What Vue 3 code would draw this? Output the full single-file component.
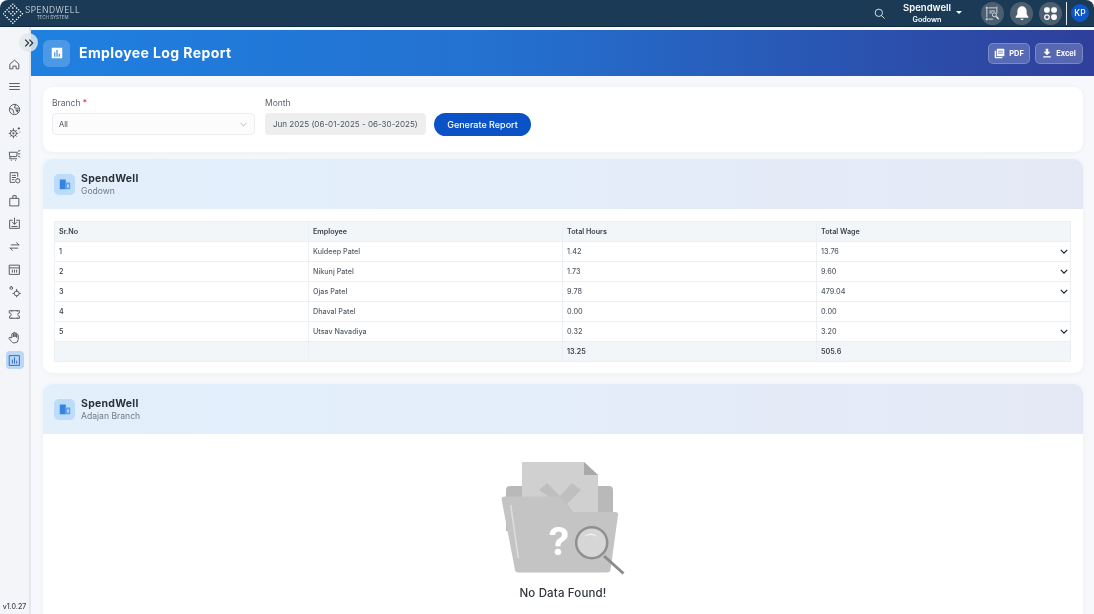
<template>
  <div class="app">
    <header class="topbar">
      <div class="logo">
        <svg class="logo-mark" viewBox="0 0 22 22" width="21" height="21">
          <rect v-for="d in logoDots" :key="d.k" :x="d.x" :y="d.y" width="1.400" height="1.400" fill="#fff" :transform="`rotate(45 ${d.x + 0.7} ${d.y + 0.7})`" />
        </svg>
        <div class="logo-text">
          <span class="logo-name">SPENDWELL</span>
          <span class="logo-sub">TECH SYSTEM</span>
        </div>
      </div>
      <div class="top-right">
        <svg class="search" viewBox="0 0 24 24" width="11" height="11" fill="none" stroke="#e8edf2" stroke-width="2">
          <circle cx="10.500" cy="10.500" r="8" />
          <path d="M16.500 16.500 23 23" />
        </svg>
        <div class="company">
          <div class="company-text">
            <span class="company-name">Spendwell</span>
            <span class="company-branch">Godown</span>
          </div>
          <span class="caret"></span>
        </div>
        <span class="round wide">
          <svg viewBox="0 0 24 24" width="15" height="15" fill="none" stroke="#d4dbe1" stroke-width="1.600">
            <path d="M3 1v4M1 3h4M19 1v4M3 19v4M1 21h4" />
            <path d="M3 5v13M19 5v7M6 3h12M6 21h7" />
            <path d="M7 8h9M7 11h4" />
            <circle cx="15" cy="14" r="3.200" />
            <path d="m17.500 16.500 4.500 4.500" stroke-width="2.400" />
          </svg>
        </span>
        <span class="round">
          <svg viewBox="0 0 24 24" width="16" height="16" fill="#fff">
            <path d="M12 2a7 7 0 0 0-7 7v5l-2.500 3.500V19h19v-1.500L19 14V9a7 7 0 0 0-7-7Z" />
            <path d="M9.500 20.500a2.600 2.600 0 0 0 5 0Z" />
          </svg>
        </span>
        <span class="round">
          <svg viewBox="0 0 24 24" width="17" height="17" fill="#fff">
            <rect x="3" y="3" width="8" height="8" rx="3" />
            <rect x="13" y="3" width="8" height="8" rx="3" />
            <circle cx="7" cy="17" r="3.200" fill="none" stroke="#fff" stroke-width="1.800" />
            <rect x="13" y="13" width="8" height="8" rx="3" />
          </svg>
        </span>
        <span class="divider"></span>
        <span class="avatar">KP</span>
      </div>
    </header>

    <div class="body-row">
      <aside class="sidebar">
        <nav class="side-nav">
          <span v-for="item in sideIcons" :key="item.name" class="side-item" :class="{ active: item.active }">
            <svg viewBox="0 0 24 24" width="13" height="13" fill="none" stroke="#555c64" stroke-width="1.800" stroke-linecap="round" stroke-linejoin="round">
              <path v-for="(p, i) in item.paths" :key="i" :d="p" />
              <path v-if="item.solid" :d="item.solid" fill="#555c64" stroke="none" />
            </svg>
          </span>
        </nav>
        <span class="version">v1.0.27</span>
      </aside>

      <span class="collapse">
        <svg viewBox="0 0 12 12" width="10" height="10" fill="none" stroke="#26323d" stroke-width="1.400">
          <path d="m1.500 2 4 4-4 4M6.500 2l4 4-4 4" />
        </svg>
      </span>

      <main class="main">
        <section class="banner">
          <div class="banner-title">
            <span class="banner-icon">
              <svg viewBox="0 0 16 16" width="12" height="12">
                <rect x="1" y="1" width="14" height="14" fill="#fff" />
                <path d="M5 7v6M8 4v9M11 9v4" stroke="#3e8ee6" stroke-width="1.600" />
              </svg>
            </span>
            <h1>Employee Log Report</h1>
          </div>
          <div class="banner-actions">
            <button class="ghost pdf">
              <svg viewBox="0 0 16 16" width="11" height="11" fill="#fff">
                <path d="M1 4h2v9h9v2H2.500A1.500 1.500 0 0 1 1 13.500Z" />
                <path d="M5 1h9a1 1 0 0 1 1 1v9a1 1 0 0 1-1 1H5a1 1 0 0 1-1-1V2a1 1 0 0 1 1-1Zm1 3v1h7V4Zm0 3v1h7V7Z" fill-rule="evenodd" />
              </svg>
              PDF
            </button>
            <button class="ghost excel">
              <svg viewBox="0 0 16 16" width="10" height="10" fill="#fff">
                <path d="M6 1h4v5h3.500L8 11.500 2.500 6H6ZM2 13h12v2H2Z" />
              </svg>
              Excel
            </button>
          </div>
        </section>

        <div class="content">
          <section class="card filters">
            <div class="field branch">
              <label>Branch <em>*</em></label>
              <div class="select">
                <span>All</span>
                <svg viewBox="0 0 10 6" width="7" height="5" fill="none" stroke="#9aa1a8" stroke-width="1.100">
                  <path d="m1 1 4 4 4-4" />
                </svg>
              </div>
            </div>
            <div class="field month">
              <label>Month</label>
              <div class="readonly">Jun 2025 (06-01-2025 - 06-30-2025)</div>
            </div>
            <button class="generate">Generate Report</button>
          </section>

          <section class="card branch-card">
            <div class="branch-head">
              <span class="branch-icon">
                <svg viewBox="0 0 16 16" width="12" height="12">
                  <path d="M1 2h8v13H1Z" fill="#3585e0" />
                  <path d="M9 6h6v9H9Z" fill="#5fa2ea" />
                  <path d="M11 8.500h2v4h-2Z" fill="#d5e8fb" />
                </svg>
              </span>
              <div class="branch-text">
                <div class="branch-name">SpendWell</div>
                <div class="branch-sub">Godown</div>
              </div>
            </div>
            <div class="table-wrap">
              <table>
                <thead>
                  <tr>
                    <th>Sr.No</th>
                    <th>Employee</th>
                    <th>Total Hours</th>
                    <th>Total Wage</th>
                  </tr>
                </thead>
                <tbody>
                  <tr v-for="row in rows" :key="row.no">
                    <td class="no">{{ row.no }}</td>
                    <td>{{ row.name }}</td>
                    <td>{{ row.hours }}</td>
                    <td class="wage">
                      {{ row.wage }}
                      <svg v-if="row.expand" class="chev" viewBox="0 0 10 6" width="8" height="5" fill="none" stroke="#15202b" stroke-width="1.500">
                        <path d="m1 1 4 4 4-4" />
                      </svg>
                    </td>
                  </tr>
                </tbody>
                <tfoot>
                  <tr>
                    <td></td>
                    <td></td>
                    <td>13.25</td>
                    <td>505.6</td>
                  </tr>
                </tfoot>
              </table>
            </div>
          </section>

          <section class="card branch-card last">
            <div class="branch-head">
              <span class="branch-icon">
                <svg viewBox="0 0 16 16" width="12" height="12">
                  <path d="M1 2h8v13H1Z" fill="#3585e0" />
                  <path d="M9 6h6v9H9Z" fill="#5fa2ea" />
                  <path d="M11 8.500h2v4h-2Z" fill="#d5e8fb" />
                </svg>
              </span>
              <div class="branch-text">
                <div class="branch-name">SpendWell</div>
                <div class="branch-sub">Adajan Branch</div>
              </div>
            </div>
            <div class="empty">
              <svg viewBox="0 0 126 116" width="126" height="116">
                <path d="M6 29q0-4 4-4h99q4 0 4 4v41H6Z" fill="#b9b9b9" />
                <path d="M22 1h62l14 13v66H22Z" fill="#d0d0d0" />
                <path d="M84 1v13h14Z" fill="#a9a9a9" />
                <path d="m39 29 8-7 13 13 12-13 9 7-14 14 6 8H53l5-9Z" fill="#bfbfbf" />
                <path d="M1.700 39q-.5-3.500 3-3.500H58q2 0 3.700 2L71.700 51H115q3.500 0 3 3l-7.500 55q-.5 2.500-3 2.500H18q-2.500 0-3-2.500Z" fill="#c4c4c4" />
                <path d="m10.700 44 7.600 53" stroke="#dedede" stroke-width="1.500" fill="none" />
                <text x="59" y="94" text-anchor="middle" class="qmark">?</text>
                <path d="m104 95 19.500 17.500" stroke="#8c8c8c" stroke-width="3" />
                <circle cx="91.700" cy="81.700" r="15.500" fill="#d6d6d6" stroke="#8f8f8f" stroke-width="2.500" />
                <path d="M83 76q8-7 15 0-7-4-15 0Z" fill="#f4f4f4" />
              </svg>
              <p>No Data Found!</p>
            </div>
          </section>
        </div>
      </main>
    </div>
  </div>
</template>

<script setup>
const rows = [
  { no: 1, name: "Kuldeep Patel", hours: "1.42", wage: "13.76", expand: true },
  { no: 2, name: "Nikunj Patel", hours: "1.73", wage: "9.60", expand: true },
  { no: 3, name: "Ojas Patel", hours: "9.78", wage: "479.04", expand: true },
  { no: 4, name: "Dhaval Patel", hours: "0.00", wage: "0.00", expand: false },
  { no: 5, name: "Utsav Navadiya", hours: "0.32", wage: "3.20", expand: true },
];

// diamond shaped logo made from small squares, with a gap through the middle
const skipDots = ["1-2", "2-1", "3-4", "4-3", "2-4", "4-2", "1-4", "4-1"];
const logoDots = [];
for (let a = 0; a < 6; a++) {
  for (let b = 0; b < 6; b++) {
    const k = a + "-" + b;
    if (skipDots.includes(k)) continue;
    logoDots.push({ k, x: 10.3 + (a - b) * 2 - 0.7, y: 0.5 + (a + b) * 2 });
  }
}

const sideIcons = [
  { name: "home", paths: ["M4 11 12 4l8 7v9h-5v-5H9v5H4Z"] },
  { name: "menu", paths: ["M3 6.500h18M3 12h18M3 17.500h18"] },
  { name: "gauge", paths: ["M12 2.500a9.500 9.500 0 1 0 0 19 9.500 9.500 0 0 0 0-19Z", "M3 10l6 2 2 7M14 3l-2 6 7 1"], solid: "M13 12h7a8 8 0 0 1-3 6Z" },
  { name: "gear", paths: ["M10 8a5.500 5.500 0 1 0 0 11 5.500 5.500 0 0 0 0-11Z", "M10 5v3M10 19v3M2 13.500h2.500M15.500 13.500H18M4.500 8l2 2M15.500 19l-2-2M15.500 8l-2 2M4.500 19l2-2", "M20 3v3M18.500 4.500h3M22 11h.01"], solid: "M10 11.500a2 2 0 1 0 0 4 2 2 0 0 0 0-4Z" },
  { name: "cart", paths: ["M3 6h14l-1 8H4Z", "M4 14l-1 4h13M6 21h.01M14 21h.01", "M19 4l3-1M19 9h3M19 13l3 2"] },
  { name: "report", paths: ["M18 10V3H4v18h8", "M8 8h6M8 12h6M8 16h3", "M18 14a4 4 0 1 0 0 8 4 4 0 0 0 0-8Z"] },
  { name: "bag", paths: ["M4 8h16v14H4Z", "M9 8V3h6v5"] },
  { name: "import", paths: ["M8 6H3v15h18V6h-5", "M12 2v11M8 9.500l4 4 4-4", "M7 17.500h10"] },
  { name: "swap", paths: ["M6 9h14M16 5l4 4", "M18 15H4M8 19l-4-4"] },
  { name: "calendar", paths: ["M3 4h18v17H3Z", "M3 9h18", "M8 13v4M12 13v4M16 13v4"] },
  { name: "settings", paths: ["M6 3a2.500 2.500 0 1 0 0 5 2.500 2.500 0 0 0 0-5Z", "M16 11a4.500 4.500 0 1 0 0 9 4.500 4.500 0 0 0 0-9Z", "M16 8v3M16 20v2M21 15.500h2M9 15.500h2"] },
  { name: "ticket", paths: ["M3 5h18v4a3 3 0 0 0 0 6v4H3v-4a3 3 0 0 0 0-6Z", "M7 5v1M7 18v1M17 5v1M17 18v1"] },
  { name: "hand", paths: ["M7 12V6a1.500 1.500 0 0 1 3 0v5V4a1.500 1.500 0 0 1 3 0v7V5a1.500 1.500 0 0 1 3 0v7V8a1.500 1.500 0 0 1 3 0v7a7 7 0 0 1-7 7h-1c-3 0-4-2-5-3l-4-5c-1-2 1-3 3-2Z"] },
  { name: "chart", active: true, paths: ["M3 3h18v18H3Z", "M8 11v6M12 7v10M16 13v4"] },
];
</script>

<style scoped>
.app {
  width: 1094px;
  height: 614px;
  display: flex;
  flex-direction: column;
  overflow: hidden;
  background: #fff;
  font-family: "Inter", "Liberation Sans", sans-serif;
  color: #212b36;
  will-change: transform;
}

.topbar {
  height: 27px;
  flex: none;
  display: flex;
  justify-content: space-between;
  align-items: center;
  background: #1b3a55;
  border-radius: 8px 8px 0 0;
  border-bottom: 1px solid #10283c;
  box-sizing: border-box;
}

.logo {
  display: flex;
  align-items: center;
  gap: 1px;
  padding-left: 3px;
}

.logo-text {
  display: flex;
  flex-direction: column;
  align-items: center;
  color: #dfe5ea;
  line-height: 1;
}

.logo-name {
  font-size: 8.500px;
  font-weight: 300;
  letter-spacing: 0.45px;
}

.logo-sub {
  font-size: 4.500px;
  margin-top: 1.500px;
  color: #b9c4cd;
}

.top-right {
  display: flex;
  align-items: center;
}

.search {
  margin-right: 18px;
}

.company {
  display: flex;
  align-items: center;
  gap: 5px;
  margin-right: 19px;
}

.company-text {
  display: flex;
  flex-direction: column;
  align-items: center;
  color: #fff;
  line-height: 1;
}

.company-name {
  font-size: 9.500px;
  font-weight: 600;
}

.company-branch {
  font-size: 7.200px;
  font-weight: 600;
  margin-top: 3px;
}

.caret {
  width: 0;
  height: 0;
  border-left: 3px solid transparent;
  border-right: 3px solid transparent;
  border-top: 3px solid #fff;
}

.round {
  width: 23px;
  height: 23px;
  border-radius: 50%;
  background: #4c5f70;
  display: flex;
  align-items: center;
  justify-content: center;
  margin-right: 6px;
}

.divider {
  width: 1px;
  height: 23px;
  background: #e4e8ec;
  margin: 0 4px 0 -2px;
}

.avatar {
  width: 18px;
  height: 18px;
  border-radius: 50%;
  background: #0f56c9;
  color: #fff;
  font-size: 8.500px;
  font-weight: 500;
  display: flex;
  align-items: center;
  justify-content: center;
  margin-right: 5px;
}

.body-row {
  flex: 1;
  min-height: 0;
  display: flex;
  position: relative;
  background: #f6f8fb;
  padding-top: 3px;
}

.sidebar {
  width: 29px;
  flex: none;
  display: flex;
  flex-direction: column;
  justify-content: space-between;
  background: #f3f5f9;
  border-right: 2px solid #e3e6ea;
  margin-top: -3px;
}

.side-nav {
  display: flex;
  flex-direction: column;
  align-items: center;
  gap: 4.800px;
  padding-top: 28px;
}

.side-item {
  width: 18px;
  height: 18px;
  border-radius: 4px;
  display: flex;
  align-items: center;
  justify-content: center;
}

.side-item.active {
  background: #bcd6f6;
}

.side-item.active svg {
  stroke: #2a6fc9;
}

.version {
  font-size: 7px;
  font-weight: 500;
  color: #3b444d;
  text-align: center;
  padding-bottom: 3px;
  white-space: nowrap;
}

.collapse {
  position: absolute;
  left: 19px;
  top: 6px;
  width: 19px;
  height: 19px;
  border-radius: 50%;
  background: rgba(226, 231, 236, 0.85);
  display: flex;
  align-items: center;
  justify-content: center;
  z-index: 2;
}

.main {
  flex: 1;
  min-width: 0;
  overflow: hidden;
}

.banner {
  height: 46px;
  display: flex;
  justify-content: space-between;
  align-items: center;
  padding: 0 11px 0 12px;
  background: linear-gradient(90deg, #1f80e0 0%, #2470cf 45%, #2f3f9b 100%);
}

.banner-title {
  display: flex;
  align-items: center;
  gap: 9px;
}

.banner-icon {
  width: 27px;
  height: 27px;
  border-radius: 6px;
  background: rgba(255, 255, 255, 0.2);
  display: flex;
  align-items: center;
  justify-content: center;
}

.banner h1 {
  margin: 0 0 2px;
  font-size: 14px;
  font-weight: 700;
  color: #fff;
  letter-spacing: 0.4px;
}

.banner-actions {
  display: flex;
  gap: 5px;
}

.ghost {
  height: 21px;
  border-radius: 5px;
  border: 1px solid rgba(255, 255, 255, 0.22);
  background: rgba(255, 255, 255, 0.2);
  color: #fff;
  font: 700 7.500px "Inter", "Liberation Sans", sans-serif;
  display: flex;
  align-items: center;
  justify-content: center;
  gap: 4px;
  padding: 0;
}

.pdf {
  width: 42px;
}

.excel {
  width: 48px;
}

.content {
  padding: 11px 11px 0 12px;
  display: flex;
  flex-direction: column;
}

.card {
  background: #fff;
  border-radius: 9px;
  box-shadow: 0 1px 5px rgba(60, 80, 110, 0.05);
}

.filters {
  height: 65px;
  box-sizing: border-box;
  display: flex;
  align-items: flex-start;
  padding: 11px 9px;
  margin-bottom: 7px;
}

.field {
  display: flex;
  flex-direction: column;
}

.field label {
  font-size: 8.500px;
  color: #5c656e;
  line-height: 11px;
  margin-bottom: 4px;
}

.field em {
  color: #e53935;
  font-style: normal;
}

.branch {
  width: 203px;
  margin-right: 10px;
}

.select {
  height: 22px;
  box-sizing: border-box;
  border: 1px solid #eaedf0;
  background: #fcfcfd;
  border-radius: 4px;
  display: flex;
  align-items: center;
  justify-content: space-between;
  padding: 0 7px 0 6px;
  font-size: 7.500px;
  color: #444c55;
}

.month {
  width: 161px;
  margin-right: 8px;
}

.readonly {
  height: 22px;
  box-sizing: border-box;
  background: #eeeeee;
  border-radius: 4px;
  font-size: 8.050px;
  line-height: 22px;
  padding-left: 8px;
  color: #4f5760;
  white-space: nowrap;
}

.generate {
  margin-top: 15px;
  width: 97px;
  height: 23px;
  border: 0;
  border-radius: 12px;
  background: #0a52c6;
  color: #fff;
  font: 500 9px "Inter", "Liberation Sans", sans-serif;
  padding: 0;
}

.branch-card {
  height: 214px;
  margin-bottom: 11px;
  overflow: hidden;
}

.branch-card.last {
  height: 260px;
  margin-bottom: 0;
}

.branch-head {
  height: 50px;
  display: flex;
  align-items: center;
  gap: 6px;
  padding-left: 11px;
  background: linear-gradient(90deg, #e2f0fc 0%, #e5e9f6 100%);
}

.branch-text {
  margin-top: 2px;
}

.branch-icon {
  width: 21px;
  height: 21px;
  border-radius: 5px;
  background: #bcdcf9;
  display: flex;
  align-items: center;
  justify-content: center;
}

.branch-name {
  font-size: 10.500px;
  font-weight: 700;
  color: #2a3138;
  line-height: 13px;
  letter-spacing: 0.25px;
}

.branch-sub {
  font-size: 8.600px;
  color: #727a82;
  line-height: 13px;
}

.table-wrap {
  padding: 12px 12px 0 11px;
}

table {
  width: 100%;
  table-layout: fixed;
  border-collapse: collapse;
  font-size: 7.200px;
  font-weight: 500;
  color: #555d66;
}

th,
td {
  height: 20px;
  box-sizing: border-box;
  border: 1px solid #edf0f3;
  padding: 0 4px;
  text-align: left;
}

th {
  font-weight: 600;
  color: #39424b;
  background: #f3f6f9;
}

td.no {
  color: #39424b;
}

.wage {
  position: relative;
}

.chev {
  position: absolute;
  right: 2px;
  top: 7px;
}

tfoot td {
  background: #f3f6f9;
  font-weight: 600;
  color: #39424b;
}

.empty {
  display: flex;
  flex-direction: column;
  align-items: center;
  padding-top: 27px;
}

.qmark {
  font: 700 38px "Inter", "Liberation Sans", sans-serif;
  fill: #fff;
}

.empty p {
  margin: 9px 0 0;
  font-size: 11.500px;
  font-weight: 500;
  color: #2e353c;
  letter-spacing: 0.15px;
}
</style>

<style>
html,
body {
  margin: 0;
  overflow: hidden;
}
</style>
